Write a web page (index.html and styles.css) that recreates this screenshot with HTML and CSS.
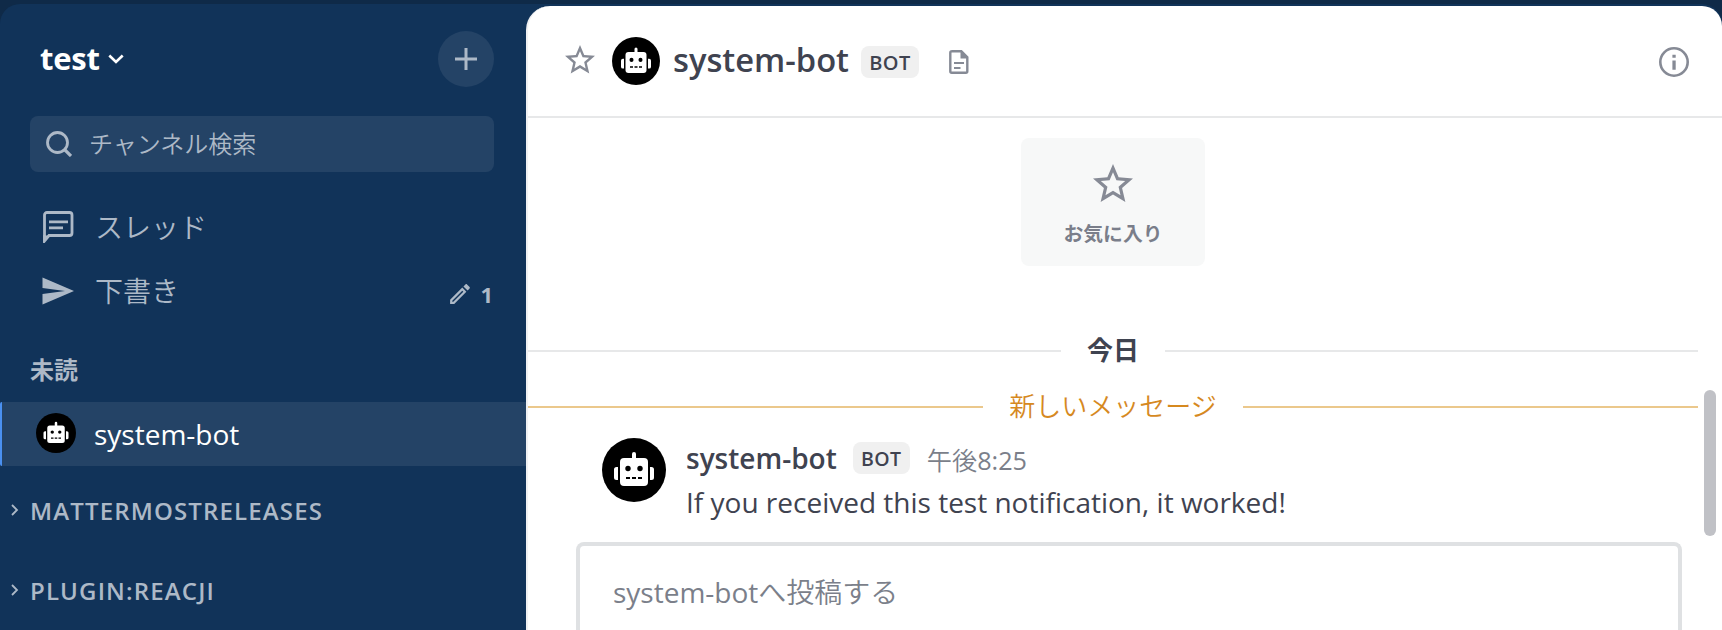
FILE: index.html
```html
<!DOCTYPE html>
<html lang="ja">
<head>
<meta charset="utf-8">
<title>system-bot</title>
<link rel="stylesheet" href="styles.css">
</head>
<body>
<svg class="defs" aria-hidden="true">
  <symbol id="robot" viewBox="0 0 64 64">
    <circle cx="32" cy="32" r="32" fill="#000"/>
    <g fill="#fff">
      <path d="M30 21v-5a2 2 0 0 1 4 0v5z"/>
      <rect x="18" y="20" width="28" height="28" rx="4"/>
      <path d="M16 29v13h-1.500a2.500 2.500 0 0 1-2.500-2.500v-8a2.500 2.500 0 0 1 2.500-2.500z"/>
      <path d="M48 29v13h1.500a2.500 2.500 0 0 0 2.500-2.500v-8a2.500 2.500 0 0 0-2.500-2.500z"/>
    </g>
    <g fill="#000">
      <circle cx="26" cy="30.500" r="2.700"/><circle cx="38" cy="30.500" r="2.700"/>
      <path d="M24 39h4v2h-4zM30 39h4v2h-4zM36 39h4v2h-4z"/>
    </g>
  </symbol>
  <symbol id="star" viewBox="0 0 24 24">
    <path d="M12 15.390l-3.760 2.270.990-4.280-3.320-2.880 4.380-.370L12 6.090l1.710 4.040 4.380.370-3.320 2.880.990 4.280M22 9.240l-7.190-.610L12 2 9.190 8.630 2 9.240l5.450 4.730L5.820 21 12 17.270 18.180 21l-1.640-7.030z"/>
  </symbol>
  <symbol id="chevron-right" viewBox="0 0 8 12">
    <path d="M1 1l5 5-5 5" fill="none" stroke="currentColor" stroke-width="1.800"/>
  </symbol>
</svg>
<div class="app">
  <aside class="sidebar">
    <header class="team">
      <h1 class="team-name">test</h1>
      <svg class="team-chevron" viewBox="0 0 16 10"><path d="M1.300 1.500L8 8l6.700-6.500" fill="none" stroke="currentColor" stroke-width="2.600"/></svg>
      <button class="add"><svg viewBox="0 0 22 22"><path d="M9.500 0h3v9.500H22v3h-9.500V22h-3v-9.500H0v-3h9.500z"/></svg></button>
    </header>
    <div class="search">
      <svg viewBox="0 0 26 26"><circle cx="11.500" cy="11.500" r="10" fill="none" stroke="currentColor" stroke-width="2.800"/><path d="M18 18l7 7" stroke="currentColor" stroke-width="3.200"/></svg>
      <span>チャンネル検索</span>
    </div>
    <nav class="nav">
      <a class="nav-item">
        <svg class="nav-icon" viewBox="0 0 32 32"><path d="M2.500 30V4a2.500 2.500 0 0 1 2.500-2.500h22.500A2.500 2.500 0 0 1 30 4v18a2.500 2.500 0 0 1-2.500 2.500H7z" fill="none" stroke="currentColor" stroke-width="2.800"/><path d="M1.100 24L1.100 32 8 25zM7 9.500h19v2.700H7zM7 15.600h14v2.700H7z"/></svg>
        <span>スレッド</span>
      </a>
      <a class="nav-item">
        <svg class="nav-icon" viewBox="0 0 32 32"><path d="M.5 2.500L32 16 .5 29.500V19L23 16 .5 13z"/></svg>
        <span>下書き</span>
        <span class="drafts"><svg viewBox="2 2 20 20"><path d="M14.060 9L15 9.940 5.920 19H5v-.920L14.060 9m3.600-6c-.250 0-.510.100-.700.290l-1.830 1.830 3.750 3.750 1.830-1.830c.390-.390.390-1.040 0-1.410l-2.340-2.340c-.200-.200-.450-.290-.710-.290m-3.600 3.190L3 17.250V21h3.750L17.810 9.940z"/></svg><b>1</b></span>
      </a>
    </nav>
    <h2 class="unreads">未読</h2>
    <a class="channel"><svg class="avatar-small"><use href="#robot"/></svg><span>system-bot</span></a>
    <div class="category"><svg><use href="#chevron-right"/></svg><span>MATTERMOSTRELEASES</span></div>
    <div class="category"><svg><use href="#chevron-right"/></svg><span>PLUGIN:REACJI</span></div>
  </aside>
  <main class="main">
    <header class="channel-header">
      <svg class="fav"><use href="#star"/></svg>
      <svg class="avatar-header"><use href="#robot"/></svg>
      <h2 class="title">system-bot</h2>
      <span class="tag">BOT</span>
      <svg class="doc" viewBox="0 0 20 24"><path d="M2.500 1.300h9.800l6 6v14a1.400 1.400 0 0 1-1.400 1.400H2.700a1.400 1.400 0 0 1-1.400-1.400V2.700a1.400 1.400 0 0 1 1.400-1.400z" fill="none" stroke="currentColor" stroke-width="2.400"/><path d="M11.500 1v7.500H19V7L13 1zM5 12h10v2H5zM5 17h6.500v2H5z"/></svg>
      <svg class="info" viewBox="0 0 30 30"><circle cx="15" cy="15" r="13.700" fill="none" stroke="currentColor" stroke-width="2.600"/><path d="M13.400 7.800h3.300v2.900h-3.300zM13.400 13.500h3.300v9.300h-3.300z"/></svg>
    </header>
    <section class="posts">
      <div class="fav-card"><svg><use href="#star"/></svg><span>お気に入り</span></div>
      <div class="divider date"><span>今日</span></div>
      <div class="divider new"><span>新しいメッセージ</span></div>
      <article class="post">
        <svg class="avatar-post"><use href="#robot"/></svg>
        <div class="post-body">
          <div class="post-head"><strong>system-bot</strong><span class="tag tag-post">BOT</span><time>午後<span>8:25</span></time></div>
          <p>If you received this test notification, it worked!</p>
        </div>
      </article>
      <div class="composer">system-bot<span>へ投稿する</span></div>
      <div class="scrollbar"></div>
    </section>
  </main>
</div>
</body>
</html>
```
FILE: styles.css
```css
* { box-sizing: border-box; margin: 0; }
body {
  height: 630px;
  overflow: hidden;
  padding-top: 4px;
  background: #0f2a48;
  font-family: "Open Sans", "Noto Sans CJK JP", sans-serif;
  color: #3f4350;
}
svg { display: block; flex: none; fill: currentColor; }
.defs { position: absolute; width: 0; height: 0; }
.app {
  display: flex;
  height: 626px;
  border-radius: 20px 20px 0 0;
  background: #113359;
}
.sidebar { flex: none; width: 526px; color: #adb9c7; }

.team { display: flex; align-items: center; height: 112px; padding: 0 32px 2px 40px; color: #fff; }
.team-name { margin-bottom: 2px; font-size: 31px; line-height: 40px; font-weight: 700; letter-spacing: -.2px; }
.team-chevron { width: 16px; height: 10px; margin-left: 8px; }
.add {
  display: grid;
  place-items: center;
  width: 56px;
  height: 56px;
  margin-left: auto;
  padding: 0;
  border: 0;
  border-radius: 50%;
  background: #244366;
  color: #adb9c7;
}
.add svg { width: 22px; height: 22px; }

.search {
  display: flex;
  align-items: center;
  gap: 17px;
  height: 56px;
  margin: 0 32px 0 30px;
  padding-left: 16px;
  border-radius: 8px;
  background: #244366;
  font-size: 24px;
  font-weight: 350;
}
.search svg { width: 26px; height: 26px; }
.search span { margin-bottom: 3px; }

.nav { padding: 23px 33px 0 42px; }
.nav-item { display: flex; align-items: center; height: 64px; font-size: 28px; line-height: 40px; font-weight: 350; }
.nav-icon { width: 32px; height: 32px; margin-right: 21px; }
.drafts { display: flex; align-items: center; gap: 9px; margin: 6px 0 0 auto; font-size: 22px; }
.drafts svg { width: 22px; height: 22px; }
.drafts b { font-weight: 700; }

.unreads { height: 64px; margin: 15px 0 0 30px; font-size: 24px; line-height: 64px; font-weight: 700; }
.channel {
  display: flex;
  align-items: center;
  height: 64px;
  border-left: 2px solid #4a90f0;
  border-radius: 2px 0 0 2px;
  background: #244366;
  padding-left: 34px;
  color: #fff;
  font-size: 28px;
}
.avatar-small { width: 40px; height: 40px; margin: 0 18px 2px 0; }
.category {
  display: flex;
  align-items: center;
  height: 80px;
  padding-left: 11px;
  font-size: 24px;
  font-weight: 600;
  letter-spacing: 1.150px;
}
.channel + .category { margin-top: 4px; }
.category svg { width: 8px; height: 12px; margin-right: 11px; }

.main {
  flex: 1;
  display: flex;
  flex-direction: column;
  margin-top: 2px;
  border-left: 2px solid #f0f1f3;
  border-radius: 24px 20px 0 0;
  background: #fff;
}
.channel-header {
  display: flex;
  align-items: center;
  height: 112px;
  padding: 2px 33px 0 34px;
  border-bottom: 2px solid #e7e8e9;
  color: #868a95;
}
.fav { width: 36px; height: 36px; margin: 0 14px 4px 0; }
.avatar-header { width: 48px; height: 48px; margin-bottom: 2px; }
.title { width: 176px; margin: 0 12px 5px 13px; font-size: 32.700px; line-height: 48px; font-weight: 600; white-space: nowrap; color: #3f4350; }
.tag {
  display: flex;
  justify-content: center;
  align-items: center;
  width: 58px;
  height: 32px;
  border-radius: 8px;
  background: #f0f0f0;
  color: #3f4350;
  font-size: 20px;
  font-weight: 600;
  letter-spacing: .5px;
}
.doc { width: 20px; height: 24px; margin-left: 30px; }
.info { width: 30px; height: 30px; margin-left: auto; }

.posts { position: relative; flex: 1; display: flex; flex-direction: column; padding-right: 24px; }
.fav-card {
  align-self: center;
  display: flex;
  flex-direction: column;
  align-items: center;
  width: 184px;
  height: 128px;
  margin-top: 20px;
  padding-top: 22px;
  border-radius: 8px;
  background: #f7f8f8;
  color: #7a7e8a;
  font-size: 19.800px;
  line-height: 28px;
  font-weight: 700;
}
.fav-card svg { width: 48px; height: 48px; margin-bottom: 12px; color: #868a95; }
.divider { display: flex; align-items: center; gap: 26px; height: 40px; font-size: 26px; line-height: 40px; }
.divider::before, .divider::after { content: ""; flex: 1; height: 2px; background: #e7e8e9; }
.date { margin-top: 65px; font-weight: 700; }
.date span, .new span { margin-top: -2px; }
.new { margin-top: 16px; color: #d6891f; font-weight: 350; }
.new::before, .new::after { background: #ebc88c; }
.post { display: flex; gap: 20px; margin-top: 11px; padding-left: 74px; }
.avatar-post { width: 64px; height: 64px; }
.post-head { display: flex; align-items: center; height: 40px; font-size: 28px; }
.post-head strong { font-weight: 600; }
.tag-post { width: 57px; margin: 0 17px 0 16px; font-size: 19.500px; }
.post-head time { padding-top: 1px; font-size: 25.200px; font-weight: 350; color: #7b7f8a; }
.post-head time span { font-weight: 400; }
.post p { height: 44px; font-size: 28px; line-height: 48px; }
.composer {
  flex: 1;
  margin: 20px 16px 0 48px;
  padding: 22px 33px 0;
  border: 4px solid #dfe1e3;
  border-bottom: 0;
  border-radius: 8px 8px 0 0;
  color: #7b7f8a;
  font-size: 28px;
  line-height: 48px;
}
.composer span { font-weight: 350; }
/* overlay scrollbar thumb */
.scrollbar { position: absolute; top: 272px; right: 6px; width: 12px; height: 146px; border-radius: 6px; background: #c0c1c6; }
```
